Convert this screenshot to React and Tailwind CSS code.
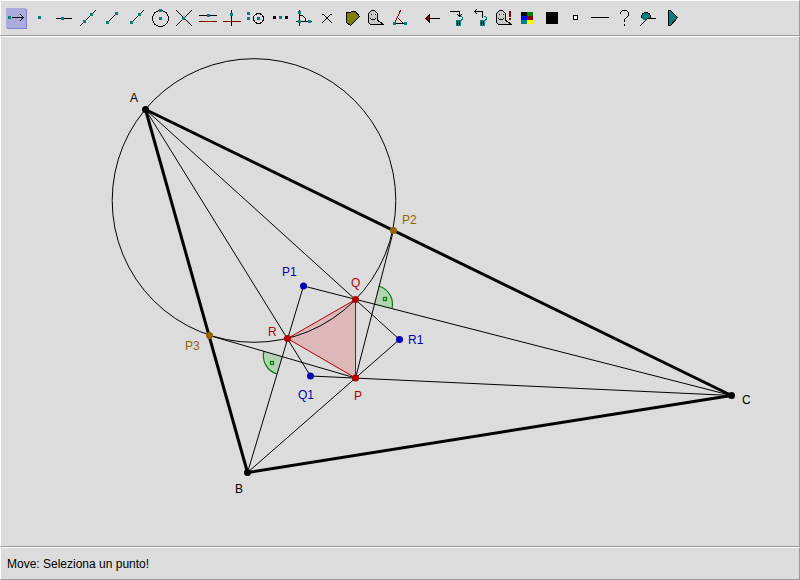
import React, { useState } from "react";

const TEAL = "#008080";
const RED = "#800000";

// 3x3 handle used by most tool icons
const Dot = ({ x, y, fill = TEAL }) => <rect x={x} y={y} width="3" height="3" fill={fill} />;

const Line = ({ x1, y1, x2, y2, stroke = "#000" }) => (
  <line x1={x1 + 0.5} y1={y1 + 0.5} x2={x2 + 0.5} y2={y2 + 0.5} stroke={stroke} strokeLinecap="square" />
);

const Ghost = () => (
  <>
    <path
      d="M4.5 16.5L2.5 14.5V5.5L5.5 2.5H8.5L11.5 5.5V12.5L13.5 13.5L17.5 16.5H4.5Z"
      fill="#c8c8c8"
      stroke="#000"
    />
    <rect x="5" y="6" width="1" height="1" />
    <rect x="9" y="6" width="1" height="1" />
    <path d="M4 10h1v1h-1zM5 11h4v1h-4zM9 10h1v1h-1z" />
  </>
);

const Trash = () => (
  <>
    <rect x="10" y="12" width="5" height="6" fill={TEAL} />
    <rect x="11" y="13" width="1" height="4" />
    <rect x="13" y="13" width="1" height="4" />
    <path d="M14 8h2v1h1v3h-1v1h-1v-2h1v-2h-2z" fill={TEAL} />
  </>
);

const tools = [
  { name: "Move", icon: <><Dot x={2} y={8} /><Line x1={6} y1={9} x2={17} y2={9} /><Line x1={14} y1={6} x2={17} y2={9} /><Line x1={14} y1={12} x2={17} y2={9} /></> },
  { name: "Point", icon: <Dot x={8} y={8} /> },
  { name: "Line", icon: <><Line x1={2} y1={10} x2={17} y2={10} /><Dot x={7} y={9} /></> },
  { name: "Line through two points", icon: <><Line x1={2} y1={17} x2={17} y2={2} /><Dot x={5} y={12} /><Dot x={12} y={5} /></> },
  { name: "Segment", icon: <><Line x1={5} y1={14} x2={14} y2={5} /><Dot x={4} y={13} /><Dot x={13} y={4} /></> },
  { name: "Ray", icon: <><Line x1={5} y1={14} x2={17} y2={2} /><Dot x={4} y={13} /><Dot x={12} y={5} /></> },
  { name: "Circle", icon: <><circle cx="10.5" cy="10.5" r="8" fill="none" stroke="#000" /><Dot x={9} y={1} /><Dot x={9} y={9} /></> },
  { name: "Intersection", icon: <><Line x1={2} y1={2} x2={17} y2={17} /><Line x1={2} y1={17} x2={17} y2={2} /><Dot x={8} y={9} /></> },
  { name: "Parallel", icon: <><Line x1={1} y1={7} x2={18} y2={7} /><Dot x={9} y={6} /><Line x1={1} y1={13} x2={18} y2={13} stroke={RED} /></> },
  { name: "Perpendicular", icon: <><Line x1={1} y1={13} x2={18} y2={13} stroke={RED} /><Line x1={9} y1={2} x2={9} y2={17} /><Dot x={8} y={5} /></> },
  { name: "Compass", icon: <><circle cx="12.5" cy="10.5" r="5" fill="none" stroke="#000" /><Dot x={1} y={4} /><Dot x={1} y={9} /><Dot x={11} y={9} /></> },
  { name: "Midpoint", icon: <><Dot x={3} y={8} fill="#000" /><Dot x={9} y={8} /><Dot x={15} y={8} fill="#000" /></> },
  { name: "Angle", icon: <><Line x1={5} y1={2} x2={5} y2={17} /><Line x1={2} y1={13} x2={17} y2={13} /><path d="M6 7.5H8.5L11.5 10.5V13" fill="none" stroke="#000" /><Dot x={4} y={3} /><Dot x={4} y={12} /><Dot x={14} y={12} /></> },
  { name: "Coordinates", icon: <><Line x1={5} y1={6} x2={12} y2={13} /><Line x1={5} y1={13} x2={12} y2={6} /><Line x1={4} y1={6} x2={4} y2={6} /><Line x1={13} y1={6} x2={13} y2={6} /><Line x1={4} y1={14} x2={4} y2={14} /><Line x1={13} y1={14} x2={13} y2={14} /></> },
  { name: "Polygon", icon: <path d="M4.5 4.5L13.5 3.5L17.5 8.5L8.5 17.5L4.5 14.5Z" fill="#808000" stroke="#000" /> },
  { name: "Hide", icon: <Ghost /> },
  { name: "Fixed angle", icon: <><Line x1={4} y1={15} x2={10} y2={2} stroke={RED} /><Line x1={7} y1={9} x2={12} y2={14} stroke={RED} /><Line x1={4} y1={15} x2={15} y2={15} /><Dot x={3} y={14} /><Dot x={14} y={14} /></> },
  { name: "Back", gap: true, icon: <><Line x1={4} y1={10} x2={17} y2={10} /><path d="M3.5 10.5L7.5 6.5V14.5Z" fill={RED} stroke="#000" /></> },
  { name: "Delete", icon: <><Line x1={4} y1={3} x2={13} y2={3} /><Line x1={13} y1={3} x2={13} y2={8} /><Line x1={11} y1={6} x2={13} y2={8} /><Line x1={15} y1={6} x2={13} y2={8} /><Trash /></> },
  { name: "Undo", icon: <><Line x1={4} y1={3} x2={12} y2={3} /><Line x1={12} y1={3} x2={12} y2={9} /><Line x1={4} y1={3} x2={6} y2={1} /><Line x1={4} y1={3} x2={6} y2={5} /><Trash /></> },
  { name: "Show hidden", icon: <><Ghost /><rect x="15" y="3" width="2" height="6" fill={RED} /><rect x="15" y="10" width="2" height="2" fill={RED} /></> },
  { name: "Color", icon: <><rect x="3" y="4" width="6" height="4" /><rect x="9" y="4" width="6" height="4" fill="#008000" /><rect x="3" y="8" width="6" height="4" fill="#0000ff" /><rect x="9" y="8" width="6" height="4" fill={RED} /><rect x="3" y="12" width="6" height="4" fill={TEAL} /><rect x="9" y="12" width="6" height="4" fill="#ffff00" /></> },
  { name: "Fill", icon: <rect x="4" y="4" width="12" height="12" /> },
  { name: "Point style", icon: <rect x="7.5" y="7.5" width="4" height="4" fill="#fff" stroke="#000" /> },
  { name: "Line style", icon: <Line x1={1} y1={9} x2={18} y2={9} /> },
  { name: "Help", icon: <><path d="M6.5 6V4.5L8.5 2.5H12.5L14.5 4.5V7.5L10.5 11.5V14" fill="none" stroke="#000" /><rect x="10" y="16" width="1" height="2" /></> },
  { name: "Macro", icon: <><path d="M5 12H8V11H13V7H12V5H10V4H6V5H4V7H3V10H4V11H5Z" fill={TEAL} /><path d="M3 7h1v3h-1zM4 5h2v1h-1v1h-1zM6 4h4v1h-4zM10 5h2v2h-1v-1h-1zM12 7h1v3h-1z" /><Line x1={9} y1={10} x2={17} y2={10} /><Line x1={8} y1={11} x2={2} y2={17} /></> },
  { name: "Replay", icon: <path d="M6.5 2.5H8.5L15.5 9.5L8.5 17.5H6.5Z" fill={TEAL} stroke="#000" /> },
];

const A = [144.5, 72.5];
const B = [246.5, 435.5];
const C = [730.5, 358.5];
const P = [354.5, 341];
const Q = [354.5, 262.5];
const R = [286.5, 301.5];
const P1 = [302.5, 249];
const Q1 = [309.5, 339];
const R1 = [398.5, 302.5];
const P2 = [392.5, 193.5];
const P3 = [208.5, 298.5];

const sides = [[A, B], [B, C], [C, A]];
const thinLines = [[A, Q1], [A, R1], [C, P1], [C, Q1], [B, P1], [B, R1], [P, P2], [P, P3]];

const points = [
  { name: "A", at: A, label: [129, 65], color: "#000000" },
  { name: "B", at: B, label: [234, 456], color: "#000000" },
  { name: "C", at: C, label: [741, 367], color: "#000000" },
  { name: "P2", at: P2, label: [401, 187], color: "#966400" },
  { name: "P3", at: P3, label: [184, 313], color: "#966400" },
  { name: "P1", at: P1, label: [281, 239], color: "#0000b4" },
  { name: "Q1", at: Q1, label: [297, 362], color: "#0000b4" },
  { name: "R1", at: R1, label: [407, 307], color: "#0000b4" },
  { name: "Q", at: Q, label: [350, 250], color: "#b40000" },
  { name: "R", at: R, label: [267, 299], color: "#b40000" },
  { name: "P", at: P, label: [353, 363], color: "#b40000" },
];

const Segments = ({ list, width }) =>
  list.map(([from, to], i) => (
    <line key={i} x1={from[0]} y1={from[1]} x2={to[0]} y2={to[1]} stroke="#000" strokeWidth={width} />
  ));

const Figure = () => (
  <svg className="block w-full grow" role="img" aria-label="Triangle ABC">
    <g fill="#b4d2b4" stroke="#008200" strokeWidth="1.2">
      <path d="M373.5 267.5L377.5 249A19 19 0 0 1 391 271.5Z" stroke="none" />
      <path d="M377.5 249A19 19 0 0 1 391 271.5" fill="none" />
      <rect x="382.5" y="260.5" width="3" height="3" />
      <path d="M281.5 320L263 314A19 19 0 0 0 276 337Z" stroke="none" />
      <path d="M263 314A19 19 0 0 0 276 337" fill="none" />
      <rect x="269.5" y="324.5" width="3" height="3" />
    </g>
    <polygon points={[P, Q, R].join(" ")} fill="#deb8b8" />
    <circle cx="253" cy="163.5" r="141.8" fill="none" stroke="#000" />
    <Segments list={thinLines} width={1} />
    <Segments list={sides} width={3} />
    <polygon points={[P, Q, R].join(" ")} fill="none" stroke="#b40000" />
    {points.map(({ name, at, label, color }) => (
      <g key={name} fill={color}>
        <circle cx={at[0]} cy={at[1]} r="3.5" />
        <text x={label[0]} y={label[1]} className="text-[12px]">{name}</text>
      </g>
    ))}
  </svg>
);

const panel = "border border-t-white border-l-white border-r-[#999999] border-b-[#999999]";

const App = () => {
  const [active, setActive] = useState("Move");

  return (
    <div className="flex min-h-screen flex-col bg-[#dcdcdc] font-['Liberation_Sans',Arial,sans-serif] text-black">
      <header className={`flex gap-1 px-[5px] py-[7px] ${panel}`}>
        {tools.map(({ name, icon, gap }) => (
          <button
            key={name}
            type="button"
            aria-label={name}
            aria-pressed={active === name}
            onClick={() => setActive(name)}
            className={`size-5 shrink-0 ${gap ? "ml-2" : ""} ${active === name ? "bg-[#acacdc] shadow-[1px_1px_0_#7c7cdc]" : ""}`}
          >
            <svg viewBox="0 0 20 20" className="block size-5" shapeRendering="crispEdges">
              {icon}
            </svg>
          </button>
        ))}
      </header>

      <main className={`flex grow flex-col ${panel}`}>
        <Figure />
      </main>

      <footer className={`flex h-[33px] items-center px-[6px] text-[12px] ${panel}`}>
        <p>{active}: Seleziona un punto!</p>
      </footer>
    </div>
  );
};

export default App;
